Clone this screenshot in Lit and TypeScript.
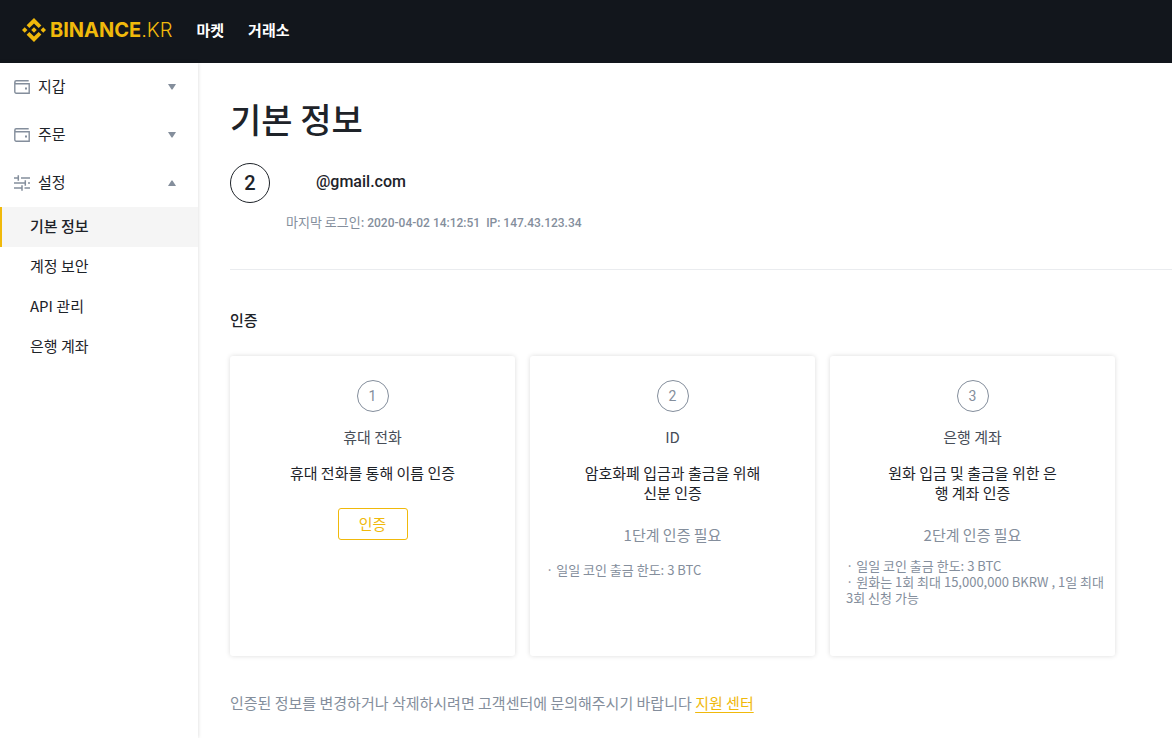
import { LitElement, html, svg, css, nothing } from "lit";
import { customElement, state } from "lit/decorators.js";

interface Step {
  title: string;
  description: string;
  action?: string;
  requirement?: string;
  notes: string[];
}

interface Group {
  id: string;
  label: string;
  icon: "wallet" | "sliders";
  items: string[];
}

const STEPS: Step[] = [
  { title: "휴대 전화", description: "휴대 전화를 통해 이름 인증", action: "인증", notes: [] },
  {
    title: "ID",
    description: "암호화폐 입금과 출금을 위해 신분 인증",
    requirement: "1단계 인증 필요",
    notes: ["· 일일 코인 출금 한도: 3 BTC"],
  },
  {
    title: "은행 계좌",
    description: "원화 입금 및 출금을 위한 은행 계좌 인증",
    requirement: "2단계 인증 필요",
    notes: ["· 일일 코인 출금 한도: 3 BTC", "· 원화는 1회 최대 15,000,000 BKRW , 1일 최대 3회 신청 가능"],
  },
];

const GROUPS: Group[] = [
  { id: "wallet", label: "지갑", icon: "wallet", items: [] },
  { id: "orders", label: "주문", icon: "wallet", items: [] },
  { id: "settings", label: "설정", icon: "sliders", items: ["기본 정보", "계정 보안", "API 관리", "은행 계좌"] },
];

const walletIcon = svg`
  <path d="M14.700 1.800H2.200A1.400 1.400 0 0 0 .800 3.200v9.600a1.400 1.400 0 0 0 1.400 1.400h13V4.700H2.200A1.400 1.400 0 0 1 .800 3.300" fill="none" stroke="currentColor" stroke-width="1.400"/>
  <rect x="11" y="8.500" width="2" height="2" fill="currentColor"/>`;

const slidersIcon = svg`
  <path d="M0 3h4.300M7 3h9M0 8h11.300M14 8h2M0 13h8M10.500 13h5.500M4.300 .2v5.600M11.300 5.200v5.600M8 10.200v5.600" fill="none" stroke="currentColor" stroke-width="1.500"/>`;

@customElement("app-header")
class AppHeader extends LitElement {
  static styles = css`
    :host { display: block; background: #12161c; color: #fff; }
    .bar { display: flex; align-items: center; height: 63px; padding: 0 22px; box-sizing: border-box; }
    .logo { display: flex; align-items: center; gap: 4px; color: #f0b90b; text-decoration: none; margin-right: 24px; padding-bottom: 3px; }
    .name { font: 700 20px/24px "Inter", sans-serif; white-space: nowrap; }
    .suffix { font-weight: 300; }
    nav { display: flex; gap: 24px; padding-bottom: 4px; }
    .link { color: #fff; text-decoration: none; font-size: 15px; line-height: 24px; font-weight: 700; }
  `;
  render() {
    return html`<header class="bar">
      <a class="logo" href="#">
        <svg width="24" height="24" viewBox="0 0 126.61 126.61" fill="currentColor" aria-hidden="true">
          <path d="m38.73 53.2 24.59-24.58 24.6 24.6 14.3-14.31L63.320 0l-38.900 38.900z"/>
          <path d="m0 63.310 14.300-14.310 14.310 14.310-14.310 14.300z"/>
          <path d="m38.730 73.410 24.590 24.590 24.600-24.600 14.310 14.290-38.910 38.920-38.900-38.880z"/>
          <path d="m98 63.310 14.300-14.310 14.310 14.300-14.310 14.320z"/>
          <path d="M77.830 63.300 63.320 48.780 48.790 63.300l14.530 14.530z"/>
        </svg>
        <span class="name">BINANCE<span class="suffix">.KR</span></span>
      </a>
      <nav><a class="link" href="#">마켓</a><a class="link" href="#">거래소</a></nav>
    </header>`;
  }
}

@customElement("side-menu")
class SideMenu extends LitElement {
  static styles = css`
    :host { display: block; background: #fff; box-shadow: 0 0 4px rgba(0, 0, 0, 0.16); }
    .group { display: flex; align-items: center; width: 100%; height: 48px; padding: 0 22px 0 14px; border: 0; background: none; color: #1e2329; font: inherit; text-align: left; cursor: pointer; }
    .icon { color: #848e9c; flex: none; margin-right: 8px; }
    .label { flex: 1; padding-bottom: 3px; }
    .caret { color: #848e9c; }
    .item { display: block; padding: 0 0 2px 28px; border-left: 2px solid transparent; line-height: 38px; color: #1e2329; text-decoration: none; }
    .current { background: #f5f5f5; border-color: #f0b90b; font-weight: 500; }
  `;

  @state() private open = "settings";

  render() {
    return html`<nav>${GROUPS.map((g) => {
      const open = this.open === g.id;
      return html`
        <button class="group" aria-expanded=${open} @click=${() => (this.open = open ? "" : g.id)}>
          <svg class="icon" width="16" height="16" viewBox="0 0 16 16" aria-hidden="true">
            ${g.icon === "wallet" ? walletIcon : slidersIcon}
          </svg>
          <span class="label">${g.label}</span>
          <svg class="caret" width="8" height="6" viewBox="0 0 8 6" fill="currentColor" aria-hidden="true">
            ${open ? svg`<path d="M0 6 3.500 .5h1L8 6z"/>` : svg`<path d="M0 0h8L4.500 5.500h-1z"/>`}
          </svg>
        </button>
        ${open
          ? g.items.map((t, i) => html`<a href="#" class=${i === 0 ? "item current" : "item"}>${t}</a>`)
          : nothing}`;
    })}</nav>`;
  }
}

@customElement("step-card")
class StepCard extends LitElement {
  static properties = { step: { attribute: false }, number: { type: Number } };
  declare step: Step;
  declare number: number;

  static styles = css`
    :host { display: block; min-height: 300px; padding: 24px 8px 24px 16px; box-sizing: border-box; border-radius: 3px; background: #fff; box-shadow: 0 0 5px rgba(0, 0, 0, 0.14); }
    .summary { padding-right: 8px; text-align: center; }
    .badge { display: flex; align-items: center; justify-content: center; width: 32px; height: 32px; box-sizing: border-box; margin: 0 auto; border: 1px solid #848e9c; border-radius: 50%; color: #848e9c; font: 400 14px/20px Roboto, sans-serif; }
    .title { margin: 15px 0 16px; font-size: 15px; line-height: 20px; font-weight: 400; color: #474d57; }
    .text { margin: 0 auto 25px; max-width: 180px; line-height: 20px; color: #1e2329; }
    .verify { width: 70px; height: 32px; padding: 0 0 2px; border: 1px solid #f0b90b; border-radius: 3px; background: none; color: #f0b90b; font: inherit; cursor: pointer; }
    .required { margin: 0 0 16px; line-height: 14px; color: #848e9c; }
    .notes { margin: 0; padding: 0; list-style: none; font-size: 13px; line-height: 16px; color: #848e9c; }
    .single { line-height: 24px; }
  `;

  render() {
    const s = this.step;
    return html`
      <div class="summary">
        <div class="badge">${this.number}</div>
        <h3 class="title">${s.title}</h3>
        <p class="text">${s.description}</p>
        ${s.action ? html`<button class="verify">${s.action}</button>` : nothing}
        ${s.requirement ? html`<p class="required">${s.requirement}</p>` : nothing}
      </div>
      ${s.notes.length
        ? html`<ul class=${s.notes.length === 1 ? "notes single" : "notes"}>${s.notes.map((n) => html`<li>${n}</li>`)}</ul>`
        : nothing}`;
  }
}

@customElement("app-root")
class AppRoot extends LitElement {
  static styles = css`
    :host { display: flex; flex-direction: column; min-height: 100vh; background: #fff; color: #1e2329; font-family: "Noto Sans CJK KR", sans-serif; font-size: 15px; }
    .body { flex: 1; display: grid; grid-template-columns: 198px minmax(0, 1fr); }
    main { padding: 32px 0 24px 32px; }
    h1 { margin: 0; font-size: 34px; line-height: 48px; font-weight: 500; }
    .profile { display: flex; gap: 16px; margin-top: 20px; padding-bottom: 35px; border-bottom: 1px solid #eaecef; }
    .level { display: flex; align-items: center; justify-content: center; width: 40px; height: 40px; box-sizing: border-box; border: 1px solid #1e2329; border-radius: 50%; font: 500 20px/24px Roboto, sans-serif; }
    .email { margin: 0; padding-left: 30px; font: 500 16px/38px Roboto, sans-serif; }
    .login { display: flex; align-items: baseline; gap: 6px; margin: 10px 0 0; font-size: 13px; line-height: 22px; color: #848e9c; }
    .value { font: 500 12px/22px Roboto, sans-serif; }
    h2 { margin: 39px 0 25px; font-size: 15px; line-height: 22px; font-weight: 500; }
    .cards { display: grid; grid-template-columns: repeat(3, minmax(0, 1fr)); gap: 15px; margin-right: 57px; }
    .help { margin: 36px 0 0; line-height: 22px; color: #848e9c; }
    .support { color: #f0b90b; text-underline-offset: 3px; }
  `;

  render() {
    return html`
      <app-header></app-header>
      <div class="body">
        <side-menu></side-menu>
        <main>
          <h1>기본 정보</h1>
          <section class="profile">
            <div class="level">2</div>
            <div>
              <p class="email">@gmail.com</p>
              <p class="login">
                <span>마지막 로그인: <span class="value">2020-04-02 14:12:51</span></span>
                <span class="value">IP: 147.43.123.34</span>
              </p>
            </div>
          </section>
          <h2>인증</h2>
          <div class="cards">${STEPS.map((s, i) => html`<step-card .step=${s} .number=${i + 1}></step-card>`)}</div>
          <p class="help">인증된 정보를 변경하거나 삭제하시려면 고객센터에 문의해주시기 바랍니다 <a class="support" href="#">지원 센터</a></p>
        </main>
      </div>`;
  }
}
